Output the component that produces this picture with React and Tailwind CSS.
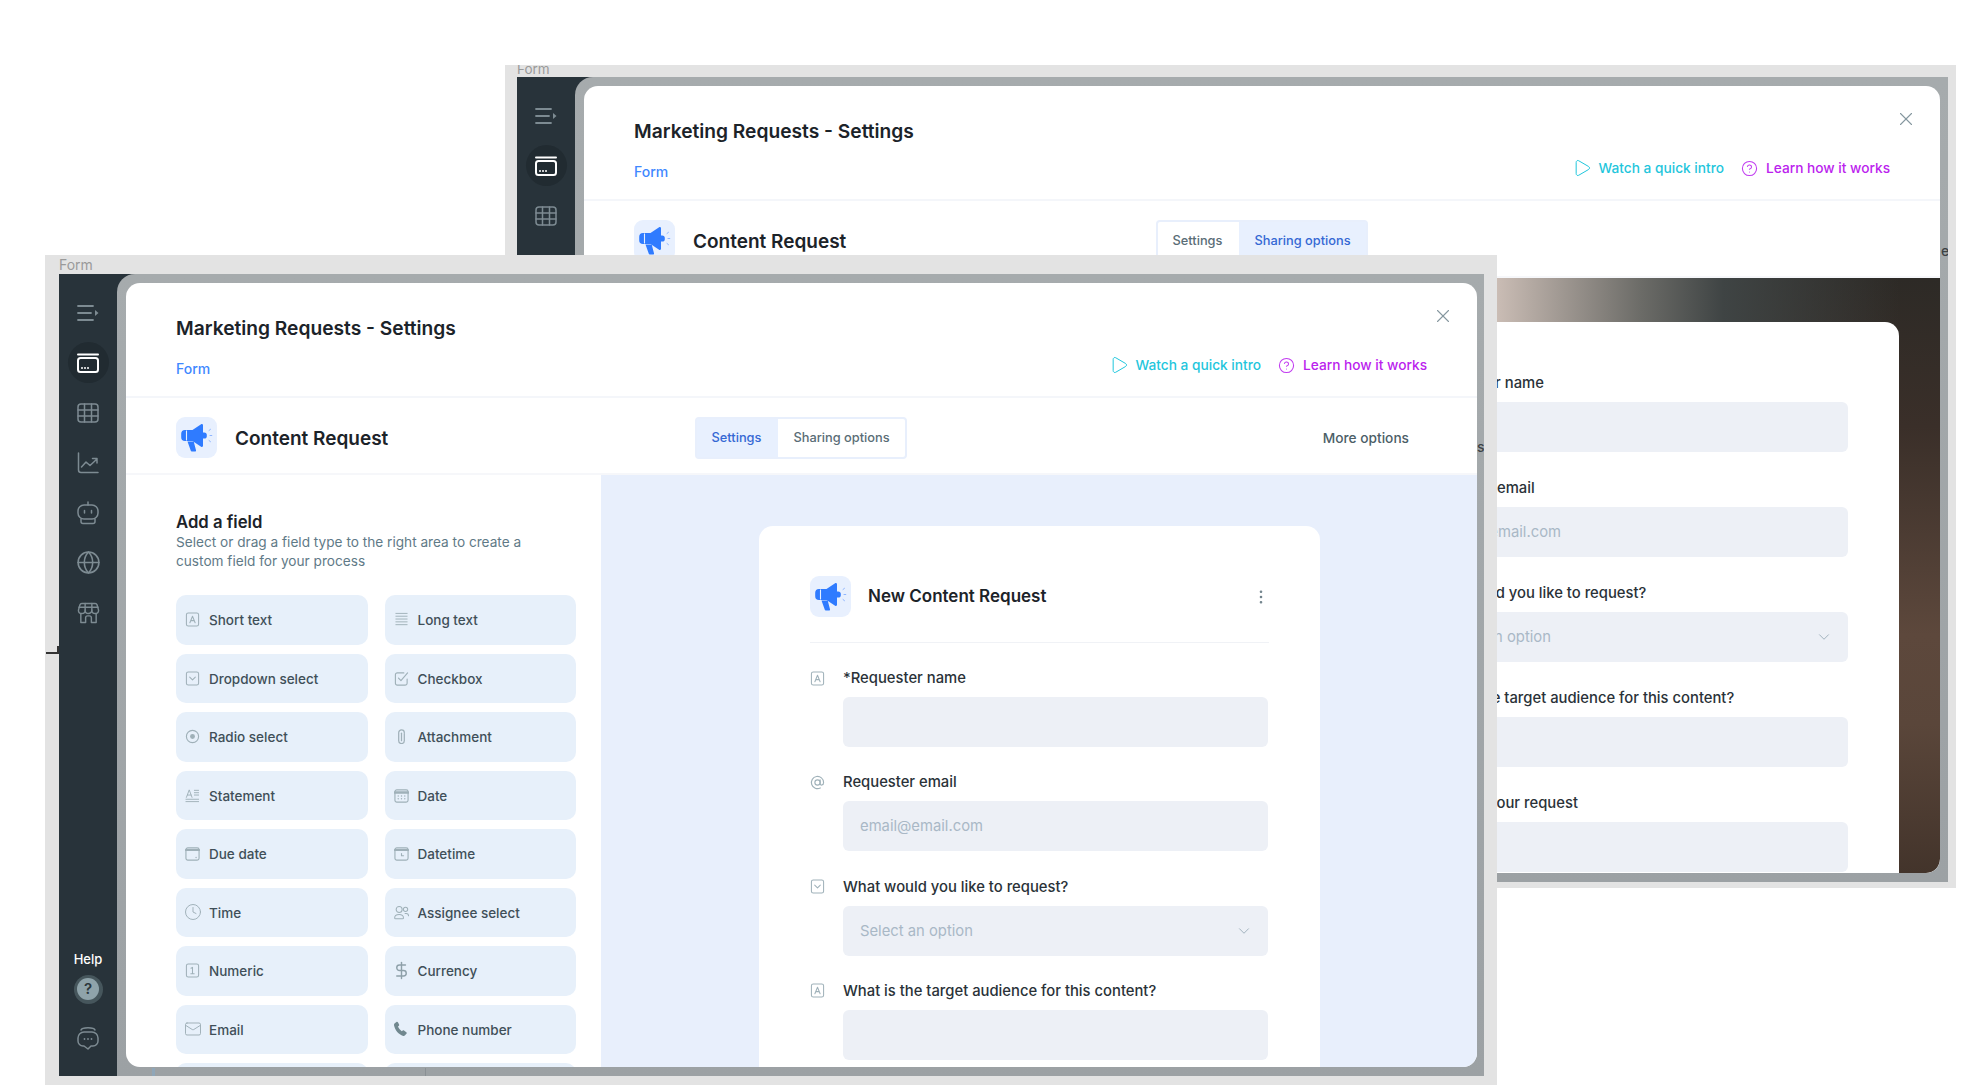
import { ChevronDown, Clock, DollarSign, Globe, Mail, MoreVertical, Play, CircleHelp, X } from 'lucide-react'

// small outline icons used in the field list, drawn on a 16 box
const Svg = ({ className = 'w-4 h-4', children, vb = '0 0 16 16', sw = 1.1 }) => (
  <svg viewBox={vb} className={className} fill="none" stroke="currentColor" strokeWidth={sw} strokeLinecap="round" strokeLinejoin="round">
    {children}
  </svg>
)

const TextBox = ({ className }) => (
  <Svg className={className}>
    <rect x="1.5" y="1" width="13" height="14" rx="2" />
    <path d="M5.2 11.5 8 4.5l2.8 7M6.2 9.2h3.6" />
  </Svg>
)
const LinesIcon = ({ className }) => (
  <Svg className={className} sw={1}>
    <path d="M2 1.500h12M2 4.500h12M2 7.500h12M2 10.500h12M2 13.500h12" />
  </Svg>
)
const SelectBox = ({ className }) => (
  <Svg className={className}>
    <rect x="1.5" y="1" width="13" height="14" rx="2" />
    <path d="m5 6.5 3 3 3-3" />
  </Svg>
)
const CheckIcon = ({ className }) => (
  <Svg className={className} sw={1.200}>
    <path d="M14 8.5V13a2 2 0 0 1-2 2H3.5a2 2 0 0 1-2-2V4a2 2 0 0 1 2-2h7" />
    <path d="m4.8 7.5 2.600 2.800L14.500 2" />
  </Svg>
)
const RadioIcon = ({ className }) => (
  <Svg className={className} sw={1.200}>
    <circle cx="8" cy="8" r="6.5" />
    <circle cx="8" cy="8" r="2.6" fill="currentColor" stroke="none" />
  </Svg>
)
const ClipIcon = ({ className }) => (
  <Svg className={className} sw={1.300}>
    <path d="M11 5v7.500a3 3 0 0 1-6 0V4a3 3 0 0 1 6 0" />
    <path d="M8 4.500v8" />
  </Svg>
)
const StatementIcon = ({ className }) => (
  <Svg className={className} sw={1}>
    <path d="M1.5 10 4.500 2l3 8M2.600 7.500h3.800M10 2.500h4.500M10 5h4.500M10 7.500h4.500M1 12h13.500M1 14.500h13.500" />
  </Svg>
)
const CalendarGrid = ({ className }) => (
  <Svg className={className} sw={1.200}>
    <rect x="1" y="2" width="14" height="13" rx="2" />
    <path d="M1 4.800h14" strokeWidth="2.800" />
    <path d="M4.500 8.500h.01M8 8.500h.01M11.500 8.500h.01M4.500 11.500h.01M8 11.500h.01M11.500 11.500h.01" strokeWidth="1.500" />
  </Svg>
)
const DueIcon = ({ className }) => (
  <Svg className={className} sw={1.200}>
    <rect x="1" y="2" width="14" height="13" rx="2" />
    <path d="M1 4.300h14" strokeWidth="2.200" />
    <path d="M11.800 12.200h.01" strokeWidth="1.500" />
  </Svg>
)
const DatetimeIcon = ({ className }) => (
  <Svg className={className} sw={1.200}>
    <rect x="1" y="2" width="14" height="13" rx="2" />
    <path d="M1 4.300h14" strokeWidth="2.200" />
    <path d="M8 8v2.400h2.200" />
  </Svg>
)
const AssigneeIcon = ({ className }) => (
  <Svg className={className} vb="0 0 16 16" sw={1.100}>
    <circle cx="5.500" cy="4.800" r="3.200" />
    <path d="M.7 13.800c0-2.400 1.800-3.600 4.800-3.600s4.600 1.200 4.600 3.600c0 .5-.4.800-1 .8H1.700c-.6 0-1-.3-1-.8z" />
    <circle cx="12.300" cy="4.600" r="2.300" />
    <path d="M11.800 9h1.300c1.500 0 2.400.9 2.400 2.400" />
  </Svg>
)
const NumericIcon = ({ className }) => (
  <Svg className={className}>
    <rect x="1.5" y="1" width="13" height="14" rx="2" />
    <path d="M6.400 5.600 8 4.600v6.800M6.200 11.400h3.600" />
  </Svg>
)
const AtIcon = ({ className }) => (
  <Svg className={className} sw={1.200}>
    <circle cx="8" cy="8" r="2.800" />
    <path d="M10.800 5.200v4c0 2.400 3.700 2 3.700-1.200A6.500 6.500 0 1 0 11 13.800" />
  </Svg>
)
// lucide glyphs don't fill their box, so these run larger than the 15px drawn ones
const ClockIcon = () => <Clock className="w-[18px] h-[18px] -mx-[1.5px]" strokeWidth={1.300} />
const MailIcon = () => <Mail className="w-[18px] h-[18px] -mx-[1.5px]" strokeWidth={1.300} />
const DollarIcon = () => <DollarSign className="w-[19px] h-[19px] -mx-[2px] text-[#8ea0a9]" strokeWidth={1.800} />
const PhoneIcon = () => (
  <svg viewBox="0 0 16 16" className="w-[16px] h-[16px] -mx-[0.5px] text-[#71888f]" fill="currentColor">
    <path d="M1.500 2.600 3.400.9c.5-.4 1.200-.3 1.500.3l1.200 2.300c.2.400.1.900-.2 1.200l-.9.9c.6 1.700 2 3.400 3.700 4.600l1.100-.7c.4-.2.900-.2 1.200.1l2.300 1.700c.5.400.6 1.100.1 1.500l-1.600 1.800c-.4.400-1 .6-1.600.4C5.600 13.200 2 9.300 1 4.200c-.1-.6.100-1.200.5-1.600z" />
  </svg>
)

const fieldTypes = [
  { label: 'Short text', icon: TextBox },
  { label: 'Long text', icon: LinesIcon },
  { label: 'Dropdown select', icon: SelectBox },
  { label: 'Checkbox', icon: CheckIcon },
  { label: 'Radio select', icon: RadioIcon },
  { label: 'Attachment', icon: ClipIcon },
  { label: 'Statement', icon: StatementIcon },
  { label: 'Date', icon: CalendarGrid },
  { label: 'Due date', icon: DueIcon },
  { label: 'Datetime', icon: DatetimeIcon },
  { label: 'Time', icon: ClockIcon },
  { label: 'Assignee select', icon: AssigneeIcon },
  { label: 'Numeric', icon: NumericIcon },
  { label: 'Currency', icon: DollarIcon },
  { label: 'Email', icon: MailIcon },
  { label: 'Phone number', icon: PhoneIcon },
  { label: '', icon: null },
  { label: '', icon: null }
]

const frontFields = [
  { label: '*Requester name', icon: TextBox },
  { label: 'Requester email', icon: AtIcon, placeholder: 'email@email.com' },
  { label: 'What would you like to request?', icon: SelectBox, placeholder: 'Select an option', select: true },
  { label: 'What is the target audience for this content?', icon: TextBox }
]

const rearFields = [...frontFields, { label: 'Describe your request', icon: TextBox }]

function Megaphone({ className }) {
  return (
    <svg viewBox="0 0 41 41" className={className}>
      <path fill="#2f7bff" d="M9 13h7.500l8.600-5.800c.8-.5 1.900.1 1.900 1v20.600c0 1-1.100 1.500-1.900 1L16.500 24H9a3.800 3.800 0 0 1-3.800-3.800v-3.400A3.800 3.800 0 0 1 9 13z" />
      <path fill="#2f7bff" d="M27 15.500h1.200a2.600 2.600 0 0 1 2.600 2.600v.8a2.600 2.600 0 0 1-2.600 2.600H27z" />
      <path fill="#2f7bff" d="M11.500 24.500h6.200l2.300 8.700c.2.700-.3 1.300-1 1.300h-3.200c-.5 0-.9-.3-1-.8z" />
      <path stroke="#e8f0fe" strokeWidth="1.100" d="M10.500 13.500v10" />
      <path stroke="#8fb6ff" strokeWidth="1" strokeLinecap="round" fill="none" d="m33 13.500 1.500-1.200M34 18.500h1.800M33 23.500l1.500 1.200" />
    </svg>
  )
}

function Sidebar() {
  const iconCls = 'w-[22px] h-[22px] text-[#7d8b92]'
  return (
    <div className="w-[58px] shrink-0 flex flex-col items-center pt-[13.500px] pb-[13px]">
      <div className="h-[50px] flex items-center justify-center">
        <Svg className={iconCls} vb="0 0 22 18" sw={1.800}>
          <path d="M1 2h15M1 9h13M1 16h15" />
          <path d="m18 6 3.500 3-3.500 3z" fill="currentColor" stroke="none" />
        </Svg>
      </div>
      <div className="h-[50px] flex items-center justify-center">
        <div className="w-[41px] h-[41px] rounded-full bg-[#212b31] flex items-center justify-center">
          <Svg className="w-[22px] h-[22px] text-white" vb="0 0 22 22" sw={2}>
            <path d="M1 2.500h20" />
            <rect x="1" y="6" width="20" height="14" rx="2.500" />
            <path d="M5 16h.01M8 16h.01M11 16h.01" />
          </Svg>
        </div>
      </div>
      <div className="h-[50px] flex items-center justify-center">
        <Svg className={iconCls} vb="0 0 22 22" sw={1.500}>
          <rect x="1" y="2" width="20" height="18" rx="3" />
          <path d="M1 8h20M1 14h20M7.500 2v18M14.500 2v18" />
        </Svg>
      </div>
      <div className="h-[50px] flex items-center justify-center">
        <Svg className={iconCls} vb="0 0 22 22" sw={1.500}>
          <path d="M1.500 1v17a2.500 2.500 0 0 0 2.500 2.500h17" />
          <path d="m4.500 15 4.500-5 4 3.500L20 7M15.500 6.500H20V11" />
        </Svg>
      </div>
      <div className="h-[50px] flex items-center justify-center">
        <Svg className="w-[22px] h-[24px] text-[#7d8b92]" vb="0 0 22 24" sw={1.500}>
          <path d="M11 1v3" />
          <rect x="1" y="4" width="20" height="14" rx="6" />
          <path d="M7.500 9.500v2.500M14.500 9.500v2.500" />
          <path d="M4 18v2.500a2 2 0 0 0 2 2h10a2 2 0 0 0 2-2V18" />
        </Svg>
      </div>
      <div className="h-[50px] flex items-center justify-center">
        <Globe className="w-[25px] h-[25px] text-[#7d8b92]" strokeWidth={1.500} />
      </div>
      <div className="h-[50px] flex items-center justify-center">
        <Svg className="w-[23px] h-[24px] text-[#7d8b92]" vb="0 0 24 24" sw={1.500}>
          <path d="M5 2h14a2 2 0 0 1 1.900 1.400L22.500 9a3.500 3.500 0 0 1-7 0 3.500 3.500 0 0 1-7 0 3.500 3.500 0 0 1-7 0l1.600-5.600A2 2 0 0 1 5 2z" />
          <path d="M2 6h20M8.500 2v7M15.500 2v7" />
          <path d="M4 13v9h5v-5a2 2 0 0 1 2-2h2a2 2 0 0 1 2 2v5h5v-9" />
        </Svg>
      </div>
      <div className="mt-auto text-[13px] leading-4 font-medium text-white">Help</div>
      <div className="h-[44px] flex items-center justify-center">
        <div className="w-[29px] h-[29px] rounded-full bg-[#46565c] flex items-center justify-center">
          <div className="w-[22px] h-[22px] rounded-full bg-[#8fa3aa] flex items-center justify-center text-[15px] font-semibold text-[#2b363c]">?</div>
        </div>
      </div>
      <div className="mt-[2px] h-[50px] flex items-center justify-center">
        <Svg className="w-[22px] h-[24px] text-[#7d8b92]" vb="0 0 22 24" sw={1.500}>
          <path d="M4 4c1-3 13-3 14 0" />
          <path d="M7 20H6a5 5 0 0 1-5-5v-3a6 6 0 0 1 6-6h8a6 6 0 0 1 6 6v3a5 5 0 0 1-5 5h-2l-3 3z" />
          <path d="M7.500 13h.01M11 13h.01M14.500 13h.01" strokeWidth="1.800" />
        </Svg>
      </div>
    </div>
  )
}

function PanelHeader({ active, tabsOffset, moreOptions }) {
  return (
    <>
      <div className="h-[115px] shrink-0 px-[50px] flex justify-between border-b-2 border-[#f4f6fa]">
        <div className="pt-[33px]">
          <h1 className="text-[19.200px] leading-6 font-semibold text-[#1c2329]">Marketing Requests - Settings</h1>
          <div className="mt-[20px] text-[14px] leading-[18px] font-medium text-[#3f88ff]">Form</div>
        </div>
        <div className="pt-[22px] flex flex-col items-end">
          <X className="w-[22px] h-[22px] -mr-[27px] text-[#86979f]" strokeWidth={1.200} />
          <div className="mt-[28px] h-[20px] flex items-center text-[13.700px] font-medium">
            <Play className="w-[20px] h-[20px] text-[#1fc6dc]" strokeWidth={1.200} />
            <span className="ml-[7px] text-[#1fc6dc]">Watch a quick intro</span>
            <CircleHelp className="ml-[17px] w-[17px] h-[17px] text-[#c13cf0]" strokeWidth={1.500} />
            <span className="ml-[8px] text-[#bb22ee]">Learn how it works</span>
          </div>
        </div>
      </div>
      <div className="h-[77px] shrink-0 pl-[50px] pr-[68px] pt-[4px] flex items-center border-b-2 border-[#f6f7fa]">
        <div className={`${tabsOffset} flex items-center`}>
          <div className="w-[41px] h-[41px] rounded-[9px] bg-[#e8f0fe]">
            <Megaphone className="w-[41px] h-[41px]" />
          </div>
          <div className="ml-[18px] pt-[3px] text-[19px] font-semibold text-[#1c2329]">Content Request</div>
        </div>
        <div className="h-[42px] flex rounded-[4px] border-2 border-[#e8effc] text-[12.800px] font-medium">
          <div className={active === 'settings' ? 'w-[81px] pr-[2px] flex items-center justify-center bg-[#e8f0fe] text-[#3568d4]' : 'w-[81px] pr-[2px] flex items-center justify-center text-[#5a6d76]'}>Settings</div>
          <div className={active === 'sharing' ? 'w-[127px] flex items-center justify-center bg-[#e8f0fe] text-[#3568d4]' : 'w-[127px] flex items-center justify-center text-[#5a6d76]'}>Sharing options</div>
        </div>
        {moreOptions && <div className="ml-auto pt-[1px] text-[13.700px] font-medium text-[#4c5e67]">More options</div>}
      </div>
    </>
  )
}

function FormFields({ fields, inputWidth, gap }) {
  return (
    <div className={`flex flex-col ${gap}`}>
      {fields.map((field) => {
        const Icon = field.icon
        return (
          <div key={field.label}>
            <div className="h-[20px] mb-[9px] flex items-center">
              <Icon className="w-[15px] h-[15px] mr-[18px] text-[#9fb1b9]" />
              <span className="text-[14.800px] font-medium text-[#2a3238]">{field.label}</span>
            </div>
            <div className={`${inputWidth} ml-[33px] h-[50px] px-[17px] rounded-[6px] bg-[#edf0f6] flex items-center justify-between text-[14.800px] text-[#a9b8c6]`}>
              <span>{field.placeholder}</span>
              {field.select && <ChevronDown className="w-[18px] h-[18px] -mr-[2px] text-[#9aabb8]" strokeWidth={1.200} />}
            </div>
          </div>
        )
      })}
    </div>
  )
}

function App() {
  return (
    <div className="relative h-[1087px] overflow-hidden bg-white font-['Inter',sans-serif]">
      {/* Window behind */}
      <div className="absolute left-[505px] top-[65px] w-[1451px] h-[823px] flex flex-col bg-[#e3e3e3] pl-[12px] pr-[8px] pb-[6px]">
        <div className="h-[12px] shrink-0 overflow-hidden text-[13.500px] leading-[8px] text-[#9a9a9a]">Form</div>
        <div className="flex-1 min-h-0 flex bg-[#28333a]">
          <Sidebar />
          <div className="flex-1 min-w-0 rounded-tl-[18px] bg-gradient-to-b from-[#a6abad] to-[#9ca1a4] pl-[9px] pt-[9px] pb-[9px] pr-[8px]">
            <div className="h-full flex flex-col rounded-[14px] overflow-hidden bg-white">
              <PanelHeader active="sharing" tabsOffset="w-[522px]" />
              <div className="flex-1 min-h-0 rounded-br-[14px] pl-[753px] pt-[44px] overflow-hidden bg-[linear-gradient(90deg,transparent_66%,#cdbfb7_67%,#6b6b67_78%,#3f4444_84%,transparent_97%),linear-gradient(180deg,#2d2a26_0%,#3a2f29_25%,#5d483c_60%,#5a463a_75%,#43342b_100%)]">
                <div className="w-[562px] h-full rounded-t-[14px] bg-white pl-[51px] pt-[51px]">
                  <FormFields fields={rearFields} inputWidth="w-[427px]" gap="gap-y-[26px]" />
                </div>
              </div>
            </div>
          </div>
        </div>
      </div>

      {/* Window in front */}
      <div className="absolute left-[45px] top-[255px] w-[1452px] h-[830px] flex flex-col bg-[#e3e3e3] pl-[14px] pr-[13px] pb-[9px]">
        <div className="h-[19px] shrink-0 text-[14px] leading-[19px] text-[#9a9a9a]">Form</div>
        <div className="flex-1 min-h-0 flex bg-[#28333a]">
          <Sidebar />
          <div className="flex-1 min-w-0 rounded-tl-[18px] bg-gradient-to-b from-[#a6abad] to-[#9ca1a4] pl-[9px] pt-[9px] pb-[9px] pr-[7px]">
            <div className="h-full flex flex-col rounded-[14px] overflow-hidden bg-white">
              <PanelHeader active="settings" tabsOffset="w-[519px]" moreOptions />
              <div className="flex-1 min-h-0 flex overflow-hidden">
                <div className="w-[475px] shrink-0 pl-[50px] pt-[36px]">
                  <h2 className="text-[16.700px] leading-[22px] font-semibold text-[#1c2329]">Add a field</h2>
                  <p className="w-[372px] text-[13.650px] leading-[19px] text-[#5f7a87]">Select or drag a field type to the right area to create a custom field for your process</p>
                  <div className="w-[400px] mt-[24px] grid grid-cols-2 gap-x-[17px] gap-y-[9px] auto-rows-[49.500px]">
                    {fieldTypes.map((field, i) => {
                      const Icon = field.icon
                      return (
                        <div key={i} className="rounded-[10px] bg-[#e7f0fa] pl-[9px] flex items-center text-[#9fb0b8]">
                          {Icon && <Icon className="w-[15px] h-[15px]" />}
                          <span className="ml-[9px] pt-[1px] text-[13.500px] font-medium text-[#3f4f58]">{field.label}</span>
                        </div>
                      )
                    })}
                  </div>
                </div>
                <div className="flex-1 flex bg-[#e8effc] pl-[158px] pt-[51px] overflow-hidden">
                  <div className="w-[561px] rounded-t-[14px] bg-white pt-[50px] px-[51px]">
                    <div className="pb-[25px] border-b border-[#f0f2f6] flex items-center">
                      <div className="w-[41px] h-[41px] rounded-[9px] bg-[#e8f0fe]">
                        <Megaphone className="w-[41px] h-[41px]" />
                      </div>
                      <div className="ml-[17px] pt-[1px] text-[17px] font-semibold text-[#1c2329]">New Content Request</div>
                      <MoreVertical className="ml-auto mr-[-1px] w-[18px] h-[18px] text-[#6d7f88]" strokeWidth={1.500} />
                    </div>
                    <div className="mt-[25px]">
                      <FormFields fields={frontFields} inputWidth="w-[425px]" gap="gap-y-[25.300px]" />
                    </div>
                  </div>
                </div>
              </div>
            </div>
          </div>
        </div>
      </div>

      {/* bits that show through or sit on the window frames */}
      <div className="absolute left-[46px] top-[652px] w-[13px] h-[2px] bg-[#333]" />
      <div className="absolute left-[57px] top-[646px] w-[2px] h-[8px] bg-[#333]" />
      <div className="absolute left-[1477px] top-[438px] w-[7px] h-[17px] overflow-hidden text-[14px] leading-[17px] font-medium text-[#3d4245]">se</div>
      <div className="absolute left-[1941px] top-[242px] w-[7px] h-[17px] overflow-hidden text-[14px] leading-[17px] font-medium text-[#3d4245]">e</div>
      <div className="absolute left-[152px] top-[1068px] w-[3px] h-[8px] bg-[#8fa6b8]" />
      <div className="absolute left-[425px] top-[1068px] w-[1px] h-[8px] bg-[#8a9094]" />
    </div>
  )
}

export default App
